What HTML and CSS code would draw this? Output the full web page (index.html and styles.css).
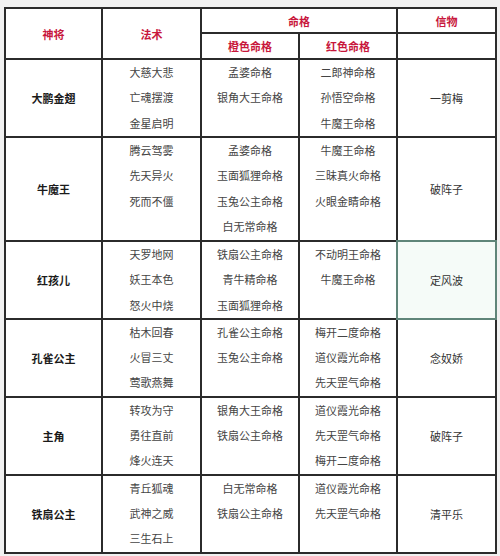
FILE: index.html
```html
<!DOCTYPE html>
<html lang="zh">
<head>
<meta charset="utf-8">
<title>命格表</title>
<link rel="stylesheet" href="styles.css">
</head>
<body>
<table class="grid">
  <colgroup>
    <col class="c1"><col class="c2"><col class="c3"><col class="c4"><col class="c5">
  </colgroup>
  <tr class="h1">
    <th rowspan="2">神将</th>
    <th rowspan="2">法术</th>
    <th colspan="2">命格</th>
    <th>信物</th>
  </tr>
  <tr class="h2">
    <th>橙色命格</th>
    <th>红色命格</th>
    <th></th>
  </tr>
  <tr class="r3">
    <td class="name">大鹏金翅</td>
    <td class="list"><div>大慈大悲</div><div>亡魂摆渡</div><div>金星启明</div></td>
    <td class="list"><div>孟婆命格</div><div>银角大王命格</div></td>
    <td class="list"><div>二郎神命格</div><div>孙悟空命格</div><div>牛魔王命格</div></td>
    <td class="item">一剪梅</td>
  </tr>
  <tr class="r4">
    <td class="name">牛魔王</td>
    <td class="list"><div>腾云驾雾</div><div>先天异火</div><div>死而不僵</div></td>
    <td class="list"><div>孟婆命格</div><div>玉面狐狸命格</div><div>玉兔公主命格</div><div>白无常命格</div></td>
    <td class="list"><div>牛魔王命格</div><div>三昧真火命格</div><div>火眼金睛命格</div></td>
    <td class="item">破阵子</td>
  </tr>
  <tr class="r3b">
    <td class="name">红孩儿</td>
    <td class="list"><div>天罗地网</div><div>妖王本色</div><div>怒火中烧</div></td>
    <td class="list"><div>铁扇公主命格</div><div>青牛精命格</div><div>玉面狐狸命格</div></td>
    <td class="list"><div>不动明王命格</div><div>牛魔王命格</div></td>
    <td class="item selected">定风波</td>
  </tr>
  <tr class="r3">
    <td class="name">孔雀公主</td>
    <td class="list"><div>枯木回春</div><div>火冒三丈</div><div>莺歌燕舞</div></td>
    <td class="list"><div>孔雀公主命格</div><div>玉兔公主命格</div></td>
    <td class="list"><div>梅开二度命格</div><div>道仪霞光命格</div><div>先天罡气命格</div></td>
    <td class="item">念奴娇</td>
  </tr>
  <tr class="r3">
    <td class="name">主角</td>
    <td class="list"><div>转攻为守</div><div>勇往直前</div><div>烽火连天</div></td>
    <td class="list"><div>银角大王命格</div><div>铁扇公主命格</div></td>
    <td class="list"><div>道仪霞光命格</div><div>先天罡气命格</div><div>梅开二度命格</div></td>
    <td class="item">破阵子</td>
  </tr>
  <tr class="r3">
    <td class="name">铁扇公主</td>
    <td class="list"><div>青丘狐魂</div><div>武神之威</div><div>三生石上</div></td>
    <td class="list"><div>白无常命格</div><div>铁扇公主命格</div></td>
    <td class="list"><div>道仪霞光命格</div><div>先天罡气命格</div></td>
    <td class="item">清平乐</td>
  </tr>
</table>
</body>
</html>
```
FILE: styles.css
```css
html, body {
  margin: 0;
  padding: 0;
}
body {
  background: #f1f1f1;
  font-family: "Noto Sans CJK SC", "Noto Sans", sans-serif;
  font-size: 11px;
  color: #444;
  height: 556px;
  overflow: hidden;
}
.grid {
  margin: 7px 0 0 4px;
  width: 493px;
  border-collapse: collapse;
  table-layout: fixed;
  background: #fff;
}
.c1 { width: 97px; }
.c2 { width: 99px; }
.c3 { width: 98px; }
.c4 { width: 98px; }
.c5 { width: 99px; }
.grid th,
.grid td {
  border: 2px solid #2b2b2b;
  padding: 0;
  text-align: center;
}
.grid th {
  color: #c8173c;
  font-weight: 700;
  vertical-align: middle;
}
.h1 { height: 25px; }
.h2 { height: 26px; }
.r3 { height: 78px; }
.r3b { height: 77px; }
.r4 { height: 104px; }
.name {
  color: #1a1a1a;
  font-weight: 700;
  vertical-align: middle;
}
.item {
  color: #333;
  vertical-align: middle;
}
.list {
  vertical-align: top;
}
.list div {
  height: 25.3px;
  line-height: 25.3px;
  white-space: nowrap;
}
.selected {
  background: #f5fbf8;
  outline: 2px solid #5f8579;
  outline-offset: -1px;
}
```
